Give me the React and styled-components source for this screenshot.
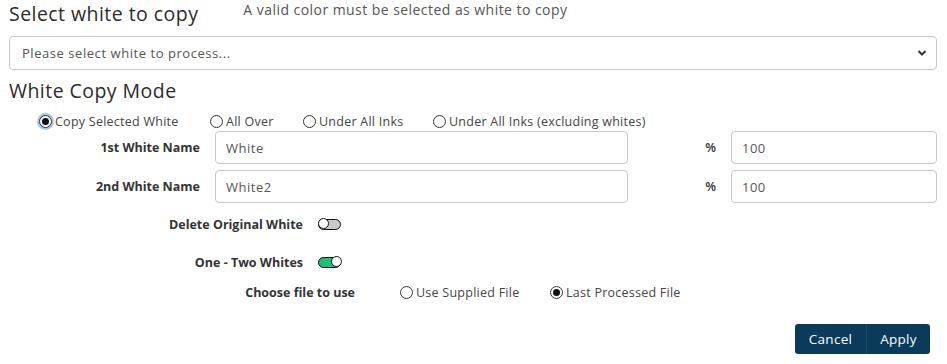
import React, { useState } from 'react';
import styled, { createGlobalStyle } from 'styled-components';

const GlobalStyle = createGlobalStyle`
    body {
        margin: 0;
        background: #fff;
        font-family: "Open Sans", "Liberation Sans", sans-serif;
        color: #333;
    }
    * { box-sizing: border-box; }
`;

const Page = styled.div`
    display: flex;
    flex-direction: column;
    padding: 0 10px 0 9px;
    width: 947px;
    height: 364px;
`;

const TitleRow = styled.div`
    display: flex;
    align-items: flex-start;
    gap: 45px;
    height: 36px;
`;

const Title = styled.h2`
    margin: 2px 0 0;
    font-size: 19.5px;
    line-height: 24px;
    letter-spacing: 0.45px;
    font-weight: 500;
    color: #2b2b2b;
`;

const Help = styled.span`
    font-size: 14px;
    line-height: 20px;
    letter-spacing: 0.45px;
    font-weight: 400;
    color: #555;
`;

const SelectBox = styled.div`
    position: relative;
    height: 34px;
    border: 1px solid #c8c8c8;
    border-radius: 4px;
    display: flex;
    align-items: center;
    padding-left: 12px;
    font-size: 13px;
    letter-spacing: 0.55px;
    color: #555;
`;

const Chevron = styled.svg`
    position: absolute;
    right: 9px;
    top: 12px;
`;

const SectionTitle = styled.h2`
    margin: 9px 0 0;
    font-size: 19.5px;
    letter-spacing: 0.45px;
    font-weight: 500;
    color: #2b2b2b;
    line-height: 24px;
`;

const RadioRow = styled.div`
    display: flex;
    align-items: center;
    padding-left: ${p => p.$indent || 0}px;
    margin-top: ${p => p.$top || 0}px;
    height: 16px;
`;

const RadioOption = styled.label`
    display: flex;
    align-items: center;
    gap: 3px;
    width: ${p => p.$width ? `${p.$width}px` : 'auto'};
    font-size: 12.5px;
    letter-spacing: 0.25px;
    font-weight: 400;
    color: #444;
`;

const RadioDot = styled.span`
    width: 13px;
    height: 13px;
    border-radius: 50%;
    border: 1px solid #333;
    background: #fff;
    display: inline-flex;
    align-items: center;
    justify-content: center;
    flex-shrink: 0;
    box-shadow: ${p => p.$focus ? '0 0 0 2px rgba(60, 130, 220, 0.45)' : 'none'};

    &::after {
        content: '';
        width: 7px;
        height: 7px;
        border-radius: 50%;
        background: ${p => p.$checked ? '#111' : 'transparent'};
    }
`;

const FieldRow = styled.div`
    display: flex;
    align-items: center;
    margin-top: ${p => p.$top || 0}px;
    height: ${p => p.$height || 33}px;
`;

const FieldLabel = styled.label`
    width: ${p => p.$width}px;
    text-align: right;
    font-size: 12.5px;
    font-weight: 700;
    color: #333;
    padding-right: ${p => p.$gap || 15}px;
    flex-shrink: 0;
`;

const TextInput = styled.input`
    width: ${p => p.$width}px;
    height: 33px;
    border: 1px solid #c8c8c8;
    border-radius: 4px;
    padding: 0 10px;
    font-family: inherit;
    font-size: 13px;
    letter-spacing: 0.5px;
    color: #555;
    outline: none;
`;

const Percent = styled.span`
    width: 103px;
    text-align: right;
    padding-right: 15px;
    font-size: 12.5px;
    font-weight: 600;
    color: #333;
`;

const Toggle = styled.span`
    width: 23px;
    height: 11px;
    border-radius: 6px;
    border: 1.5px solid #111;
    background: ${p => p.$on ? '#1fbf7a' : '#c9c9c9'};
    position: relative;
    display: inline-block;

    &::after {
        content: '';
        position: absolute;
        top: -1.5px;
        ${p => p.$on ? 'right: -1.5px;' : 'left: -1.5px;'}
        width: 11px;
        height: 11px;
        border-radius: 50%;
        border: 1.5px solid #111;
        background: #fff;
        box-sizing: border-box;
    }
`;

const Actions = styled.div`
    display: flex;
    justify-content: flex-end;
    padding-right: 7px;
    margin-top: 23px;
`;

const Button = styled.button`
    height: 30px;
    padding: 0 12px;
    border: none;
    border-left: ${p => p.$side === 'right' ? '1px solid #1d4a67' : 'none'};
    border-radius: ${p => p.$side === 'left' ? '3px 0 0 3px' : '0 3px 3px 0'};
    background: #0b3b5b;
    color: #fff;
    font-family: inherit;
    font-size: 13.5px;
    font-weight: 500;
    letter-spacing: 0.3px;
    width: ${p => p.$width}px;
`;

const modes = [
    { label: 'Copy Selected White', width: 171 },
    { label: 'All Over', width: 93 },
    { label: 'Under All Inks', width: 130 },
    { label: 'Under All Inks (excluding whites)' },
];

const App = () => {
    const [mode] = useState(0);

    return (
        <Page>
            <GlobalStyle />
            <TitleRow>
                <Title>Select white to copy</Title>
                <Help>A valid color must be selected as white to copy</Help>
            </TitleRow>
            <SelectBox>
                Please select white to process...
                <Chevron width="10" height="8" viewBox="0 0 10 8">
                    <path d="M1.5 2 L5 5.5 L8.5 2" fill="none" stroke="#333" strokeWidth="2" />
                </Chevron>
            </SelectBox>
            <SectionTitle>White Copy Mode</SectionTitle>
            <RadioRow $indent={30} $top={10}>
                {modes.map((m, i) => (
                    <RadioOption key={m.label} $width={m.width}>
                        <RadioDot $checked={i === mode} $focus={i === mode} />
                        {m.label}
                    </RadioOption>
                ))}
            </RadioRow>
            <FieldRow $top={2}>
                <FieldLabel $width={206}>1st White Name</FieldLabel>
                <TextInput $width={413} defaultValue="White" />
                <Percent>%</Percent>
                <TextInput $width={206} defaultValue="100" />
            </FieldRow>
            <FieldRow $top={6}>
                <FieldLabel $width={206}>2nd White Name</FieldLabel>
                <TextInput $width={413} defaultValue="White2" />
                <Percent>%</Percent>
                <TextInput $width={206} defaultValue="100" />
            </FieldRow>
            <FieldRow $top={10} $height={22}>
                <FieldLabel $width={309}>Delete Original White</FieldLabel>
                <Toggle />
            </FieldRow>
            <FieldRow $top={16} $height={22}>
                <FieldLabel $width={309}>One - Two Whites</FieldLabel>
                <Toggle $on />
            </FieldRow>
            <FieldRow $top={10} $height={18}>
                <FieldLabel $width={391} $gap={45}>Choose file to use</FieldLabel>
                <RadioOption $width={150}>
                    <RadioDot />
                    Use Supplied File
                </RadioOption>
                <RadioOption>
                    <RadioDot $checked />
                    Last Processed File
                </RadioOption>
            </FieldRow>
            <Actions>
                <Button $side="left" $width={71}>Cancel</Button>
                <Button $side="right" $width={64}>Apply</Button>
            </Actions>
        </Page>
    );
};

export default App;
